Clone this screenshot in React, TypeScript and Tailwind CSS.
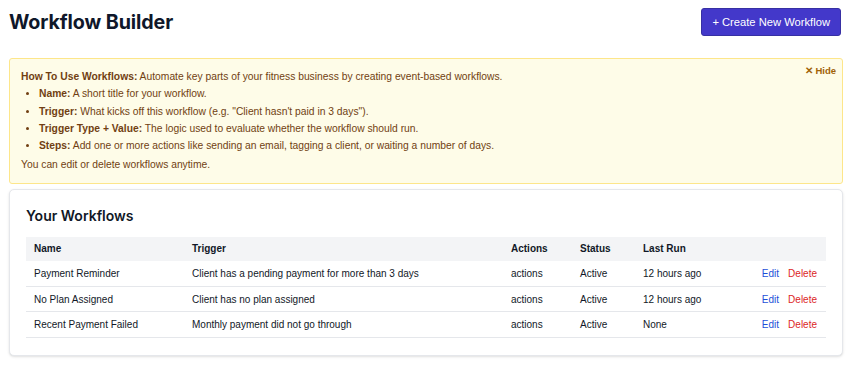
import React from "react";

const rows = [
  { name: "Payment Reminder", trigger: "Client has a pending payment for more than 3 days", last: "12 hours ago" },
  { name: "No Plan Assigned", trigger: "Client has no plan assigned", last: "12 hours ago" },
  { name: "Recent Payment Failed", trigger: "Monthly payment did not go through", last: "None" },
];

export default function App() {
  return (
    <div className="w-[852px] h-[368px] bg-white px-[9px] pt-[8px] text-[#111827]" style={{ fontFamily: "'Liberation Sans', Arial, sans-serif" }}>
      <div className="flex items-center justify-between h-[28px]">
        <h1 className="text-[19.7px] font-bold tracking-[-0.1px] text-[#0f172a] pt-[1px]" style={{ fontFamily: "Inter, sans-serif" }}>Workflow Builder</h1>
        <button className="h-[28px] px-[10px] mr-[2px] rounded-[3px] bg-[#4338ca] border border-[#3730a3] text-white text-[11.2px]">+ Create New Workflow</button>
      </div>

      <div className="relative mt-[22px] border border-[#fde68a] bg-[#fefce8] rounded-[3px] px-[11px] pt-[9px] pb-[9px] text-[10.3px] text-[#713f12] leading-[17.3px]">
        <button className="absolute right-[6px] top-[3px] text-[9.5px] text-[#a16207] font-semibold">✕ Hide</button>
        <p><span className="font-bold">How To Use Workflows:</span> Automate key parts of your fitness business by creating event-based workflows.</p>
        <ul className="list-disc pl-[18px]">
          <li><span className="font-bold">Name:</span> A short title for your workflow.</li>
          <li><span className="font-bold">Trigger:</span> What kicks off this workflow (e.g. "Client hasn't paid in 3 days").</li>
          <li><span className="font-bold">Trigger Type + Value:</span> The logic used to evaluate whether the workflow should run.</li>
          <li><span className="font-bold">Steps:</span> Add one or more actions like sending an email, tagging a client, or waiting a number of days.</li>
        </ul>
        <p className="mt-[2px]">You can edit or delete workflows anytime.</p>
      </div>

      <div className="mt-[5px] border border-[#e5e7eb] rounded-[5px] bg-white shadow-sm px-[16px] pt-[15px] pb-[17px]">
        <h2 className="text-[14px] font-semibold text-[#111827] mb-[11px]" style={{ fontFamily: "Inter, sans-serif" }}>Your Workflows</h2>
        <table className="w-full text-[10px] border-collapse">
          <thead>
            <tr className="bg-[#f3f4f6] h-[24px] text-left">
              <th className="font-bold pl-[8px] w-[158px]">Name</th>
              <th className="font-bold pl-[8px] w-[319px]">Trigger</th>
              <th className="font-bold pl-[8px] w-[69px]">Actions</th>
              <th className="font-bold pl-[8px] w-[63px]">Status</th>
              <th className="font-bold pl-[8px]">Last Run</th>
              <th></th>
            </tr>
          </thead>
          <tbody>
            {rows.map((r) => (
              <tr key={r.name} className="h-[25.5px] border-b border-[#e5e7eb]">
                <td className="pl-[8px]">{r.name}</td>
                <td className="pl-[8px]">{r.trigger}</td>
                <td className="pl-[8px]">actions</td>
                <td className="pl-[8px]">Active</td>
                <td className="pl-[8px]">{r.last}</td>
                <td className="text-right pr-[9px]">
                  <span className="text-[#1d4ed8] mr-[9px]">Edit</span>
                  <span className="text-[#dc2626]">Delete</span>
                </td>
              </tr>
            ))}
          </tbody>
        </table>
      </div>
    </div>
  );
}
